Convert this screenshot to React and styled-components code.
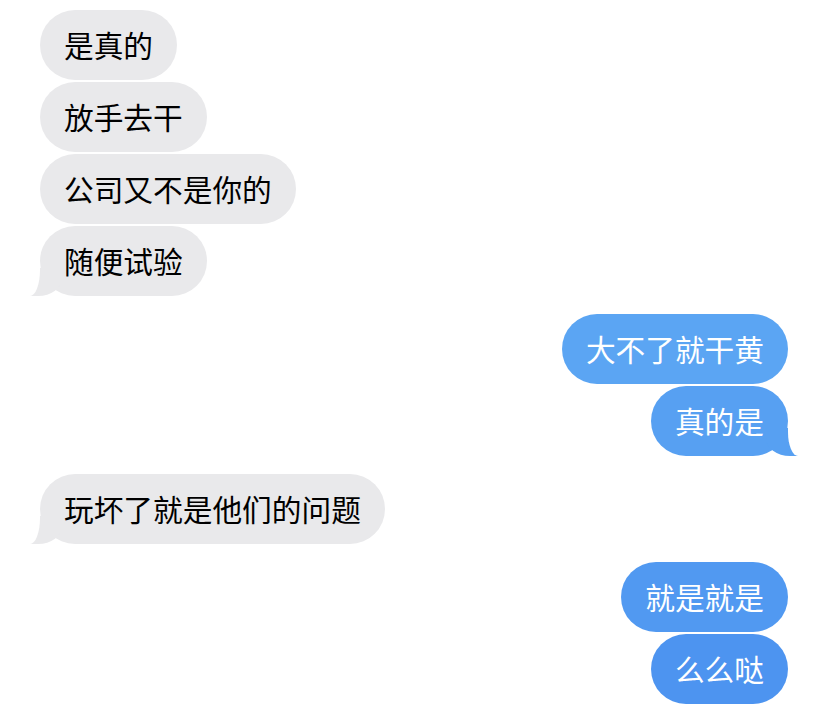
import React from "react";
import styled, { createGlobalStyle, css } from "styled-components";

const Global = createGlobalStyle`
  html, body { margin: 0; padding: 0; background: #ffffff; }
  body { font-family: "Noto Sans CJK SC", "Noto Sans", sans-serif; }
`;

const Thread = styled.div`
  display: flex;
  flex-direction: column;
  gap: 18px;
  padding: 10px 40px 0 40px;
  width: 828px;
  height: 706px;
  box-sizing: border-box;
  overflow: hidden;
`;

const Group = styled.div`
  display: flex;
  flex-direction: column;
  gap: 2px;
  align-items: ${(p) => (p.$mine ? "flex-end" : "flex-start")};
`;

const tailLeft = css`
  &::before {
    content: "";
    position: absolute;
    bottom: 0;
    left: -10px;
    width: 32px;
    height: 28px;
    background: ${(p) => p.$bg};
    border-bottom-right-radius: 24px 18px;
  }
  &::after {
    content: "";
    position: absolute;
    bottom: 0;
    left: -40px;
    width: 40px;
    height: 32px;
    background: #ffffff;
    border-bottom-right-radius: 10px 26px;
  }
`;

const tailRight = css`
  &::before {
    content: "";
    position: absolute;
    bottom: 0;
    right: -10px;
    width: 32px;
    height: 28px;
    background: ${(p) => p.$bg};
    border-bottom-left-radius: 24px 18px;
  }
  &::after {
    content: "";
    position: absolute;
    bottom: 0;
    right: -40px;
    width: 40px;
    height: 32px;
    background: #ffffff;
    border-bottom-left-radius: 10px 24px;
  }
`;

const Bubble = styled.div`
  position: relative;
  box-sizing: border-box;
  height: 70px;
  padding: 15px 24px;
  line-height: 40px;
  font-size: 29.7px;
  white-space: nowrap;
  border-radius: 35px;
  background: ${(p) => p.$bg};
  color: ${(p) => (p.$mine ? "#ffffff" : "#000000")};
  ${(p) => (p.$tail ? (p.$mine ? tailRight : tailLeft) : "")}
`;

const GREY = "#e9e9eb";

const groups = [
  {
    mine: false,
    items: [
      ["是真的", GREY],
      ["放手去干", GREY],
      ["公司又不是你的", GREY],
      ["随便试验", GREY],
    ],
    tail: true,
  },
  {
    mine: true,
    items: [
      ["大不了就干黄", "#5ba5f3"],
      ["真的是", "#57a0f2"],
    ],
    tail: true,
  },
  {
    mine: false,
    items: [["玩坏了就是他们的问题", GREY]],
    tail: true,
  },
  {
    mine: true,
    items: [
      ["就是就是", "#5199f1"],
      ["么么哒", "#4d94f0"],
    ],
    tail: false,
  },
];

export default function App() {
  return (
    <>
      <Global />
      <Thread>
        {groups.map((g, gi) => (
          <Group key={gi} $mine={g.mine}>
            {g.items.map(([text, bg], i) => (
              <Bubble
                key={i}
                $mine={g.mine}
                $bg={bg}
                $tail={g.tail && i === g.items.length - 1}
              >
                {text}
              </Bubble>
            ))}
          </Group>
        ))}
      </Thread>
    </>
  );
}
